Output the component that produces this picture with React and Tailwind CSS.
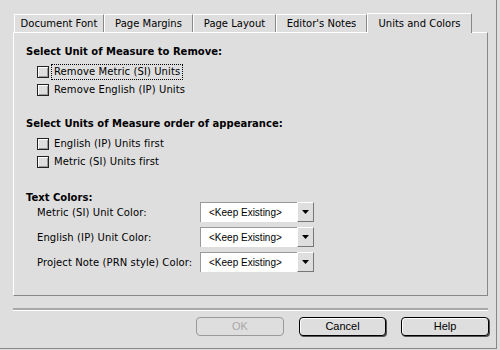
import React from "react";

const font = { fontFamily: '"DejaVu Sans", Verdana, sans-serif' };
const sans = { fontFamily: '"Liberation Sans", Arial, sans-serif' };

function Tab({ label, width, active }) {
  if (active) {
    return (
      <div
        className="relative z-10 -mb-px h-[20px] flex items-center justify-center pb-[1px] border-t border-l border-white border-r border-r-[#888] bg-[#dedede] text-[10px] text-black"
        style={{ width }}
      >
        {label}
      </div>
    );
  }
  return (
    <div
      className="h-[18px] flex items-center justify-center border-t border-l border-white border-r border-r-[#888] text-[10px] text-black"
      style={{ width }}
    >
      {label}
    </div>
  );
}

function Checkbox({ label, focused }) {
  return (
    <div className="h-[18px] flex items-center ml-[11px]">
      <div className="w-[12px] h-[12px] border border-[#222] bg-[#dedede] shadow-[inset_1px_1px_0_#fff,inset_-1px_-1px_0_#999]" />
      <span
        className={`ml-[2px] px-[2px] leading-[14px] text-[10px] tracking-[0.1px] border border-dotted ${focused ? "border-black" : "border-transparent"}`}
      >
        {label}
      </span>
    </div>
  );
}

function Select({ label, className }) {
  return (
    <div className={`h-[20px] flex items-center ml-[11px] ${className || ""}`}>
      <span className="w-[163px] text-[10px] tracking-[0.1px] whitespace-nowrap">{label}</span>
      <div className="flex h-[20px] w-[114px]">
        <div
          className="flex-1 bg-white border-t border-l border-[#999] flex items-center pl-[8px] text-[10px]"
          style={sans}
        >
          &lt;Keep Existing&gt;
        </div>
        <div className="w-[17px] bg-[#dedede] border-t border-l border-white border-r border-b border-r-[#777] border-b-[#777] flex items-center justify-center">
          <svg width="7" height="4" viewBox="0 0 7 4">
            <path d="M0 0h7L3.5 4z" fill="#000" />
          </svg>
        </div>
      </div>
    </div>
  );
}

function Button({ label, width, disabled }) {
  return (
    <div
      className={`h-[19px] rounded-[4px] border flex items-center justify-center text-[11px] bg-[#dedede] ${
        disabled
          ? "border-[#9a9a9a] text-[#a8a8a8]"
          : "border-black text-black shadow-[1px_1px_0_#555,inset_1px_1px_0_#fff]"
      }`}
      style={{ ...sans, width }}
    >
      {label}
    </div>
  );
}

export default function App() {
  return (
    <div className="w-[500px] h-[350px] bg-[#dedede] overflow-hidden text-black" style={font}>
      <div className="w-[497px] h-[349px] border-r border-b border-[#888] pl-[13px] pt-[13px]">
        {/* tabs */}
        <div className="flex items-end h-[19px] pl-[1px]">
          <Tab label="Document Font" width={90} />
          <Tab label="Page Margins" width={89} />
          <Tab label="Page Layout" width={83} />
          <Tab label="Editor's Notes" width={91} />
          <Tab label="Units and Colors" width={105} active />
        </div>

        {/* panel */}
        <div className="w-[475px] h-[264px] border-t border-l border-white border-r border-b border-r-[#888] border-b-[#888] pl-[12px] flex flex-col">
          <div className="mt-[12px] h-[12px] flex items-center font-bold text-[10px]">
            Select Unit of Measure to Remove:
          </div>
          <div className="mt-[6px]">
            <Checkbox label="Remove Metric (SI) Units" focused />
            <Checkbox label="Remove English (IP) Units" />
          </div>

          <div className="mt-[18px] h-[12px] flex items-center font-bold text-[10px]">
            Select Units of Measure order of appearance:
          </div>
          <div className="mt-[6px]">
            <Checkbox label="English (IP) Units first" />
            <Checkbox label="Metric (SI) Units first" />
          </div>

          <div className="mt-[21px] h-[10px] flex items-center font-bold text-[10px]">
            Text Colors:
          </div>
          <Select label="Metric (SI) Unit Color:" />
          <Select label="English (IP) Unit Color:" className="mt-[5px]" />
          <Select label="Project Note (PRN style) Color:" className="mt-[5px]" />
        </div>

        {/* separator */}
        <div className="mt-[12px] w-[475px] h-[2px] bg-[#a8a8a8]" />
        <div className="w-[475px] h-px bg-white" />

        {/* buttons */}
        <div className="mt-[6px] flex gap-[15px] pl-[183px]">
          <Button label="OK" width={88} disabled />
          <Button label="Cancel" width={87} />
          <Button label="Help" width={88} />
        </div>
      </div>
    </div>
  );
}
